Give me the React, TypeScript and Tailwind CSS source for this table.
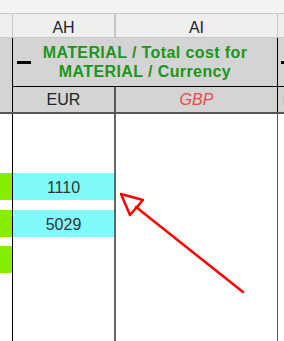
import React from 'react';

const App: React.FC = () => {
  return (
    <div className="relative w-[284px] h-[341px] overflow-hidden bg-white flex flex-col font-['Liberation_Sans',Arial,sans-serif]">
      {/* Toolbar strip */}
      <div className="h-[14px] shrink-0 bg-[#f3f3f3] border-b border-[#c9c9c9]" />

      {/* Column letters */}
      <div className="h-[24px] shrink-0 flex bg-[#efefef] border-b border-[#c6c6c6] text-[16px] text-[#222]">
        <div className="w-[13px] shrink-0 border-r border-[#c6c6c6]" />
        <div className="w-[103px] shrink-0 border-r-2 border-[#c6c6c6] text-center pt-[4px] leading-[20px]">AH</div>
        <div className="w-[162px] shrink-0 border-r border-[#c6c6c6] text-center pt-[4px] leading-[20px]">AI</div>
        <div className="flex-1" />
      </div>

      {/* Group + currency header */}
      <div className="h-[76px] shrink-0 flex bg-[#d4d4d4] border-b-2 border-[#555]">
        <div className="w-[13px] shrink-0 border-r border-black" />
        <div className="flex-1 flex flex-col">
          <div className="h-[49px] shrink-0 flex border-b border-black">
            <div className="relative w-[265px] shrink-0 border-r border-black flex items-center justify-center">
              <div className="absolute left-[4px] top-[23px] w-[14px] h-[3px] bg-black" />
              <p className="text-center text-[16px] leading-[19px] font-bold tracking-[0.4px] text-[#1a961a]">
                MATERIAL / Total cost for
                <br />
                MATERIAL / Currency
              </p>
            </div>
            <div className="relative flex-1">
              <div className="absolute left-[3px] top-[23px] w-[14px] h-[3px] bg-black" />
            </div>
          </div>
          <div className="flex-1 flex text-[16px] leading-[25px]">
            <div className="w-[103px] shrink-0 border-r-2 border-[#555] text-center text-[#222]">EUR</div>
            <div className="w-[162px] shrink-0 border-r border-black text-center italic text-[#e84a4a]">GBP</div>
            <div className="flex-1 pl-[4px] text-[#bbbbbb]">(</div>
          </div>
        </div>
      </div>

      {/* Body */}
      <div className="flex-1 flex text-[16px] text-[#333]">
        <div className="w-[13px] shrink-0 border-r border-black flex flex-col pt-[59px]">
          <div className="h-[27px] bg-[#86ee00]" />
          <div className="h-[27px] mt-[10px] bg-[#86ee00]" />
          <div className="h-[27px] mt-[9px] bg-[#86ee00]" />
        </div>
        <div className="w-[103px] shrink-0 border-r-2 border-[#666] flex flex-col pt-[59px]">
          <div className="h-[27px] bg-[#80fafa] text-center leading-[29px]">1110</div>
          <div className="h-[27px] mt-[10px] bg-[#80fafa] text-center leading-[29px]">5029</div>
        </div>
        <div className="w-[162px] shrink-0 border-r border-[#555]" />
        <div className="flex-1" />
      </div>

      {/* Annotation arrow */}
      <svg className="absolute inset-0 pointer-events-none" width="284" height="341" viewBox="0 0 284 341">
        <line x1="243" y1="292" x2="136" y2="207" stroke="#ff0000" strokeWidth="2.5" strokeLinecap="round" />
        <polygon points="121,194 143,200 130,215" fill="none" stroke="#ff0000" strokeWidth="2.5" strokeLinejoin="round" />
      </svg>
    </div>
  );
};

export default App;
